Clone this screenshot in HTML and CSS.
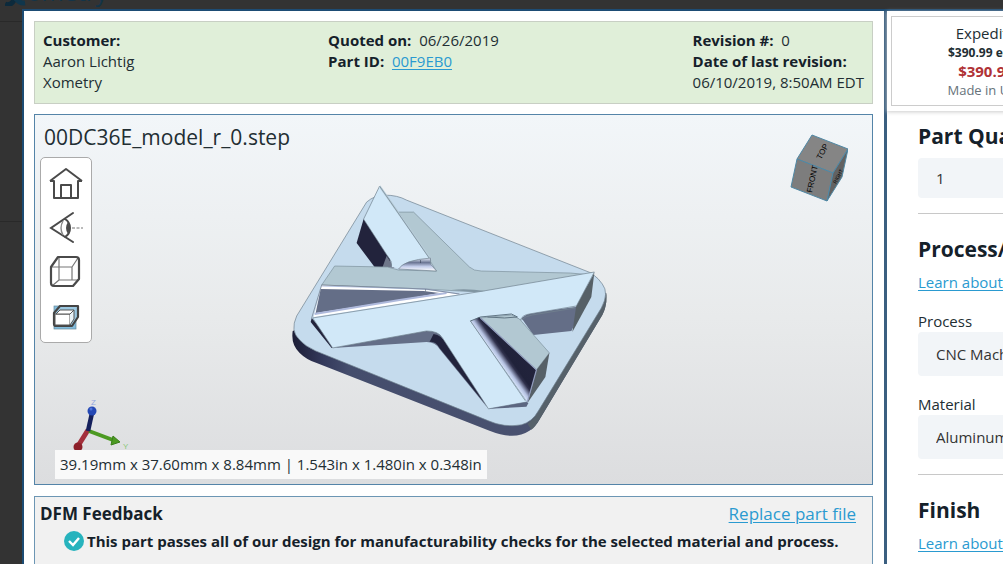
FILE: index.html
```html
<!DOCTYPE html>
<html lang="en">

<head>
    <meta charset="UTF-8">
    <meta name="viewport" content="width=device-width, initial-scale=1.0">
    <title>00DC36E_model_r_0.step</title>
    <link rel="stylesheet" href="styles.css">
</head>

<body>
    <header class="site-header">
        <svg class="site-logo" width="22" height="12" viewBox="0 0 22 12">
            <path d="M0 10Q5 13 10 5L13 0" fill="none" stroke="#0c2a3c" stroke-width="5" />
            <path d="M8 0Q13 10 20 9" fill="none" stroke="#10364c" stroke-width="5" />
        </svg>
        <span class="site-name">ometry</span>
    </header>
    <div class="site-strip"></div>

    <div class="modal">
        <main class="part">
            <section class="info">
                <div>
                    <b>Customer:</b><br>
                    Aaron Lichtig<br>
                    Xometry
                </div>
                <div>
                    <b>Quoted on:</b>&nbsp; 06/26/2019<br>
                    <b>Part ID:</b>&nbsp; <a href="#">00F9EB0</a>
                </div>
                <div>
                    <b>Revision #:</b>&nbsp; 0<br>
                    <b>Date of last revision:</b><br>
                    06/10/2019, 8:50AM EDT
                </div>
            </section>

            <section class="viewer">
                <svg class="model" viewBox="35 115 838 369">
                    <defs>
                        <linearGradient id="side" x1="0" x2="1">
                            <stop offset="0" stop-color="#1c1d36" />
                            <stop offset="0.1" stop-color="#343a5c" />
                            <stop offset="0.18" stop-color="#444d6c" />
                            <stop offset="0.82" stop-color="#4a5270" />
                            <stop offset="0.92" stop-color="#626c88" />
                            <stop offset="1" stop-color="#4d5964" />
                        </linearGradient>
                        <linearGradient id="fillet" gradientUnits="userSpaceOnUse" x1="471" y1="321" x2="492" y2="306">
                            <stop offset="0" stop-color="#cfdcf4" />
                            <stop offset="0.1" stop-color="#b4c0e0" />
                            <stop offset="0.3" stop-color="#30314c" />
                            <stop offset="0.4" stop-color="#20223a" />
                            <stop offset="1" stop-color="#22233c" />
                        </linearGradient>
                        <linearGradient id="shine" x1="0" x2="0" y1="0" y2="1">
                            <stop offset="0" stop-color="#e4ecfa" />
                            <stop offset="0.35" stop-color="#6c7694" />
                            <stop offset="0.65" stop-color="#c3cdea" />
                            <stop offset="1" stop-color="#ffffff" />
                        </linearGradient>
                    </defs>
                    <!-- base plate -->
                    <path d="M293 331Q291 345 300 353Q307 360 317 363L490 431Q515 441 530 431Q536 427 540 420L603 315Q608 306 607 293L580 290L320 320Z" fill="url(#side)" />
                    <path d="M607 294V302Q606 309 603 315L540 420Q536 427 532 430L528 424Q535 419 539 411L602 307Z" fill="#56616a" />
                    <path d="M367 202L297 316Q290 331 300 340Q305 346 316 351L489 421Q505 428 522 425Q533 422 539 411L602 308Q610 293 603 284Q600 279 592 273L407 200Q398 195 385 195Q375 195 367 202Z" fill="#c5dbed" stroke="#71828e" stroke-width="0.7" />

                    <!-- upper and left arms -->
                    <path d="M364 219L357 243L375 267H392L390 258Z" fill="#22233c" />
                    <path d="M387 256L395 268L383 267Z" fill="#70788b" />
                    <path d="M399 212H414L470 267Q474 271 482 271L571 273L593 275L484 292L460 291L426 289L322 285L335 266L388 267L399 270L437 271Z" fill="#b2c8d2" stroke="#7e929d" stroke-width="0.7" />
                    <path d="M380 186L364 219L388 256Q393 261 392 267L399 268L431 262L431 260Z" fill="#d1e8f8" />
                    <path d="M392 267Q393 261 388 256L364 219L380 186" fill="none" stroke="#71828e" stroke-width="0.7" />
                    <path d="M380 186L432 260" fill="none" stroke="#b7ccd8" stroke-width="2" />
                    <path d="M380 186L431 260" fill="none" stroke="#71828e" stroke-width="0.7" />
                    <path d="M399 269Q404 260 431 258V264L437 271Z" fill="url(#shine)" stroke="#71828e" stroke-width="0.7" />
                    <path d="M421 260V263" stroke="#333c50" stroke-width="0.6" />

                    <!-- left pocket -->
                    <path d="M322 285L314 317L462 294L426 290Z" fill="#fff" />
                    <path d="M321 289L316 313L400 300L440 293L424 291Z" fill="#646e87" />
                    <path d="M315 314L400 300L447 293" fill="none" stroke="#aeb9dc" stroke-width="2" />
                    <path d="M322 286L426 289L460 294" fill="none" stroke="#b5c4e4" stroke-width="1" />
                    <path d="M322 285L426 289L460 294M426 289V293M322 285L312 318" fill="none" stroke="#6c7888" stroke-width="0.7" />

                    <!-- long arm with lower branch -->
                    <path d="M312 318L311 322L332 348L336 346Z" fill="#22233c" />
                    <path d="M333 348L427 342Q436 342 440 349L488 408L439 332L425 329Z" fill="#646e87" />
                    <path d="M434 334Q442 335 447 344L488 407L440 348Q436 341 430 342Z" fill="#22233c" />
                    <path d="M584 306L572 331L534 335L522 318L530 313Z" fill="#646e87" />
                    <path d="M595 273L592 297L573 332L577 305Z" fill="#566067" />
                    <path d="M313 318L459 295L484 291L595 272L577 306L530 314Q523 315 521 320L511 316L471 321L528 402L489 409L443 338Q439 331 427 331L333 348Z" fill="#d1e8f8" stroke="#71828e" stroke-width="0.7" />
                    <path d="M452 290Q466 288 486 291L475 292Z" fill="#8095a2" />
                    <path d="M576 308L533 315Q526 316 522 320" fill="none" stroke="#71828e" stroke-width="0.8" />

                    <!-- lower right block -->
                    <path d="M471 321L480 317L537 370L528 402Z" fill="url(#fillet)" />
                    <path d="M481 318L512 315L520 319L550 353L537 370Z" fill="#b2c8d2" stroke="#7e929d" stroke-width="0.7" />
                    <path d="M471 321L481 317L512 314L518 317L505 318L488 317" fill="none" stroke="#566a78" stroke-width="0.9" />
                    <path d="M550 353L546 377L528 403L537 370Z" fill="#566067" />
                    <path d="M481 318L537 370L528 402" fill="none" stroke="#8f9abb" stroke-width="1.2" />
                    <path d="M471 321L526 401" stroke="#71828e" stroke-width="0.7" />
                    <path d="M489 409L527 402L529 403L527 407Z" fill="#5c6680" />
                </svg>

                <h1 class="filename">00DC36E_model_r_0.step</h1>

                <div class="toolbar">
                    <button type="button" aria-label="Home">
                        <svg width="36" height="36" viewBox="0 0 36 36">
                            <path d="M2 15L18 3L34 15M2 15H6V32H30V15H34M13 32V19H23V32" fill="none" stroke="#4a4a4a" stroke-width="2" stroke-linejoin="round" />
                        </svg>
                    </button>
                    <button type="button" aria-label="View">
                        <svg width="36" height="36" viewBox="0 0 36 36">
                            <path d="M25 3L3 18L25 32M17 9Q22 12 22 18Q22 24 17 27" fill="none" stroke="#4a4a4a" stroke-width="2" stroke-linecap="round" />
                            <path d="M15 11Q11 18 15 25" fill="none" stroke="#888" stroke-width="1.4" />
                            <path d="M20 12Q16 18 20 24Q23 18 20 12Z" fill="#4a4a4a" />
                            <path d="M24 18H35" stroke="#777" stroke-width="1.2" stroke-dasharray="3 1.5" />
                        </svg>
                    </button>
                    <button type="button" aria-label="Wireframe">
                        <svg width="36" height="36" viewBox="0 0 36 36">
                            <path d="M9 13H24V26M24 13L30 4M4 13H9M11 4V26H30M11 26L4 32" fill="none" stroke="#777" stroke-width="1.2" />
                            <path d="M10 3H28Q31 3 31 6V25L25 32H6Q3 32 3 29V13Z" fill="none" stroke="#4a4a4a" stroke-width="2.2" stroke-linejoin="round" />
                        </svg>
                    </button>
                    <button type="button" aria-label="Section">
                        <svg width="36" height="36" viewBox="0 0 36 36">
                            <rect x="6" y="8" width="22" height="23" fill="#82bbdb" stroke="#668a9c" stroke-width="0.7" />
                            <path d="M6 15L12 8H30V19L24 28H8Q6 28 6 26Z" fill="#9cc9e2" stroke="#444" stroke-width="2.2" stroke-linejoin="round" />
                            <path d="M7 16H22V27H7Z" fill="#fff" stroke="#555" />
                            <path d="M8 16L12 12H26L22 16Z" fill="#fff" stroke="#555" />
                            <path d="M22 16L26 12V21L22 27" fill="#e8f2f7" stroke="#555" />
                        </svg>
                    </button>
                </div>

                <svg class="cube" width="60" height="70" viewBox="788 133 60 70">
                    <g stroke="#4f88a5" stroke-linejoin="round">
                        <path d="M812 135L848 149L833 173L797 159Z" fill="#858585" />
                        <path d="M797 159L833 173L827 201L791 187Z" fill="#7d7d7d" />
                        <path d="M833 173L848 149L842 177L827 201Z" fill="#626262" />
                    </g>
                    <text x="812" y="193" transform="rotate(-78 812 193)">FRONT</text>
                    <text class="cube-top" x="821" y="160" transform="rotate(-62 821 160)">TOP</text>
                    <text class="cube-side" x="836" y="184" transform="rotate(-62 836 184)">RIGHT</text>
                </svg>

                <svg class="axes" width="60" height="60" viewBox="70 396 60 60">
                    <path d="M88 430L78 446" stroke="#a32f3b" stroke-width="5" />
                    <path d="M89 431L113 440" stroke="#4c9a22" stroke-width="4" />
                    <path d="M88 431L92 413" stroke="#15205c" stroke-width="4.5" />
                    <path d="M113 436L120 442L111 445Z" fill="#4c9a22" stroke="#397d19" />
                    <circle cx="92" cy="411" r="4.5" fill="#2448b4" />
                    <circle cx="91" cy="409" r="1.5" fill="#5074d8" />
                    <circle cx="78" cy="447" r="4.5" fill="#8c1f29" />
                    <text x="91" y="405" fill="#93a7e0">Z</text>
                    <text x="123" y="449" fill="#8cc97a">Y</text>
                </svg>

                <div class="dimensions">39.19mm x 37.60mm x 8.84mm | 1.543in x 1.480in x 0.348in</div>
            </section>

            <section class="dfm">
                <div class="dfm-head">
                    <h2>DFM Feedback</h2>
                    <a href="#">Replace part file</a>
                </div>
                <p class="dfm-result">
                    <svg width="20" height="20" viewBox="0 0 20 20">
                        <circle cx="10" cy="10" r="10" fill="#27b3bd" />
                        <path d="M5 10L9 14L15 7" fill="none" stroke="#fff" stroke-width="2.4" />
                    </svg>
                    This part passes all of our design for manufacturability checks for the selected material and process.
                </p>
            </section>
        </main>

        <aside class="options">
            <div class="prices">
                <div class="price">
                    <div class="price-name">Expedite</div>
                    <div class="price-each">$390.99 each</div>
                    <div class="price-total">$390.99</div>
                    <div class="price-origin">Made in USA</div>
                </div>
            </div>
            <form class="form">
                <div class="group">
                    <h2><label for="quantity">Part Quantity</label></h2>
                    <input type="text" id="quantity" value="1">
                </div>
                <div class="group">
                    <h2>Process/Material</h2>
                    <a href="#">Learn about processes</a>
                    <label for="process">Process</label>
                    <select id="process">
                        <option>CNC Machining</option>
                    </select>
                    <label for="material">Material</label>
                    <select id="material">
                        <option>Aluminum 6061</option>
                    </select>
                </div>
                <div class="group">
                    <h2>Finish</h2>
                    <a href="#">Learn about finishes</a>
                </div>
            </form>
        </aside>
    </div>
</body>

</html>
```
FILE: styles.css
```css
* {
    box-sizing: border-box;
}

body {
    margin: 0;
    height: 100vh;
    overflow: hidden;
    background-color: #333;
    color: #222e33;
    font-family: "Open Sans", "Noto Sans", sans-serif;
    font-size: 15px;
    line-height: 21px;
}

h1,
h2,
p {
    margin: 0;
}

b,
h2 {
    color: #15212a;
    font-weight: bold;
}

a {
    color: #2a9ad0;
    text-underline-offset: 2px;
}

.site-header {
    display: flex;
    align-items: flex-start;
    height: 22px;
    padding-left: 5px;
    border-bottom: 1px solid #292929;
    overflow: hidden;
}

.site-logo {
    margin-top: -6px;
}

.site-name {
    margin-top: -26px;
    color: #123448;
    font-size: 24px;
    line-height: 36px;
}

.site-strip {
    height: 200px;
    border-bottom: 1px solid #292929;
}

.modal {
    position: absolute;
    top: 9px;
    left: 22px;
    right: -200px;
    bottom: -40px;
    display: flex;
    background-color: #fff;
    border: 2px solid #1d4c74;
}

.part {
    flex: 1;
    min-width: 0;
    padding: 10px 11px 0 10px;
}

.info {
    display: flex;
    justify-content: space-between;
    padding: 8px 8px 10px;
    background-color: #e0efd9;
    border: 1px solid #c8cfc4;
}

.viewer {
    position: relative;
    margin: 10px 0 11px;
    border: 1px solid #5484a8;
    background: linear-gradient(#f2f6f9, #e8eaeb 55%, #dcdddf);
}

.model {
    display: block;
    width: 100%;
    height: 369px;
}

.filename {
    position: absolute;
    top: 8px;
    left: 9px;
    font-size: 21px;
    font-weight: normal;
    line-height: 28px;
}

.toolbar {
    position: absolute;
    top: 42px;
    left: 5px;
    display: flex;
    flex-direction: column;
    gap: 8px;
    padding: 8px 7px;
    background-color: #fff;
    border: 1px solid #aaa;
    border-radius: 5px;
}

.toolbar button {
    display: block;
    padding: 0;
    border: 0;
    background: none;
    line-height: 0;
}

.cube {
    position: absolute;
    top: 18px;
    right: 24px;
    font-family: "Liberation Sans", sans-serif;
    font-size: 8px;
}

.cube .cube-top {
    font-size: 8px;
}

.cube .cube-side {
    font-size: 5px;
}

.axes {
    position: absolute;
    bottom: 28px;
    left: 35px;
    font-family: "Liberation Sans", sans-serif;
    font-size: 8px;
}

.dimensions {
    position: absolute;
    bottom: 5px;
    left: 20px;
    padding: 4px 5px;
    background-color: #f9f9f9;
}

.dfm {
    height: 120px;
    padding: 5px 16px 0 5px;
    background-color: #f1f1f1;
    border: 1px solid #6c96b4;
}

.dfm-head {
    display: flex;
    justify-content: space-between;
}

.dfm-head h2 {
    font-size: 17px;
    line-height: 24px;
}

.dfm-head a {
    font-size: 17px;
    line-height: 24px;
}

.dfm-result {
    display: flex;
    gap: 3px;
    margin-top: 5px;
    padding-left: 24px;
    color: #15212a;
    font-weight: bold;
}

.options {
    width: 317px;
    border-left: 3px solid #3b5f80;
}

.prices {
    padding: 5px 4px;
    box-shadow: 0 1px 4px #ccc;
}

.price {
    width: 190px;
    padding: 7px 0 5px;
    border: 1px solid #ccc;
    text-align: center;
    line-height: 19px;
}

.price-each {
    font-size: 12px;
    font-weight: bold;
}

.price-total {
    color: #b03236;
    font-weight: bold;
}

.price-origin {
    color: #66727a;
    font-size: 13px;
}

.form {
    padding: 11px 31px;
}

.group {
    margin-bottom: 21px;
    padding-bottom: 15px;
    border-bottom: 1px solid #c8c8c8;
}

.group h2 {
    font-size: 21px;
    line-height: 28px;
}

.group > a,
.group > label {
    display: block;
    margin-top: 9px;
}

.group > a + label,
.group > select + label {
    margin-top: 18px;
}

.group input,
.group select {
    display: block;
    width: 100%;
    height: 44px;
    padding: 0 18px;
    border: 0;
    border-radius: 4px;
    background-color: #f2f5f8;
    color: #333;
    font: inherit;
    appearance: none;
}

.group input {
    height: 40px;
    margin-top: 8px;
}
```
